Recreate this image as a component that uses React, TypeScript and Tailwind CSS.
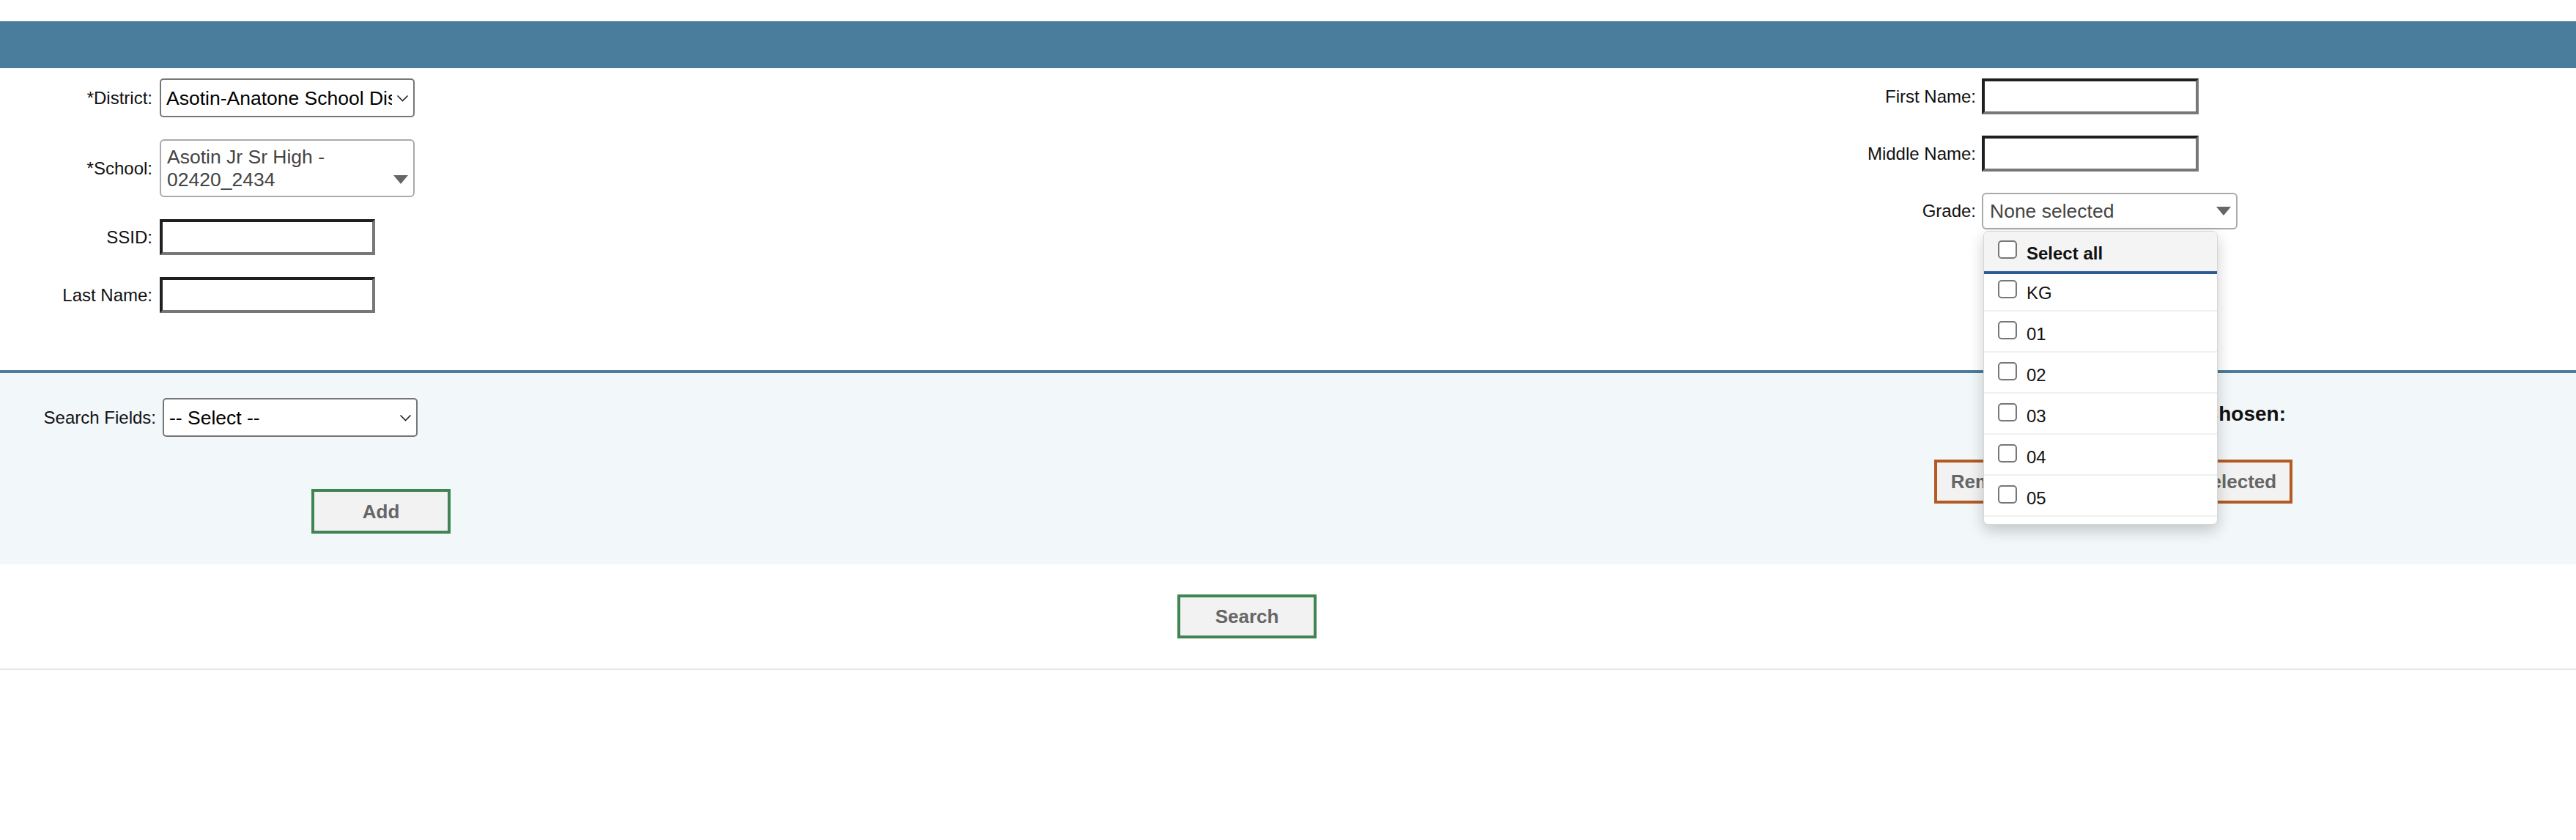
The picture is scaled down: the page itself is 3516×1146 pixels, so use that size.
import React from 'react';

const GRADES = ['KG', '01', '02', '03', '04', '05', '06', '07', '08', '09', '10', '11', '12'];

function Chevron() {
  return (
    <svg width="17" height="10" viewBox="0 0 17 10" fill="none" className="shrink-0">
      <path d="M1.5 1.5L8.5 8.5L15.5 1.5" stroke="#222" strokeWidth="1.6" />
    </svg>
  );
}

function Caret() {
  return (
    <svg width="20" height="12" viewBox="0 0 20 12" className="shrink-0">
      <path d="M0 0H20L10 12Z" fill="#666" />
    </svg>
  );
}

function Label({ children }: { children: React.ReactNode }) {
  return <div className="text-right text-[24px] leading-[28px] text-[#111] whitespace-nowrap">{children}</div>;
}

function TextInput({ w }: { w: string }) {
  return (
    <div
      className={`${w} h-[49px] bg-white border-4 border-t-[#1f1f1f] border-l-[#1f1f1f] border-b-[#777] border-r-[#777]`}
    />
  );
}

function NativeSelect({ text, w }: { text: string; w: string }) {
  return (
    <div
      className={`${w} h-[53px] flex items-center bg-white border-2 border-[#767676] rounded-[5px] pl-[7px] pr-[6px]`}
    >
      <span className="flex-1 min-w-0 overflow-hidden whitespace-nowrap text-[26.5px] leading-[32px] text-black">
        {text}
      </span>
      <span className="ml-[6px]">
        <Chevron />
      </span>
    </div>
  );
}

function Checkbox() {
  return <span className="block shrink-0 w-[26px] h-[25px] bg-white border-2 border-[#777] rounded-[5px]" />;
}

function GradeDropdown() {
  return (
    <div className="absolute left-[2px] top-[52px] z-10 w-[320px] h-[401px] overflow-hidden bg-white border border-[#d6d6d6] rounded-[7px] shadow-[0_8px_20px_rgba(0,0,0,0.2)]">
      <div className="h-[58px] flex items-start gap-[13px] pl-[19px] bg-[#f4f4f4] border-b-4 border-[#2c5a94]">
        <span className="mt-[12px]">
          <Checkbox />
        </span>
        <span className="mt-[16px] text-[24px] leading-[28px] font-bold text-[#111]">Select all</span>
      </div>
      {GRADES.map((g, i) => (
        <div
          key={g}
          className={`flex items-start gap-[13px] pl-[19px] border-b-2 border-[#f0f0f0] ${
            i === 0 ? 'h-[51px]' : 'h-[56px]'
          }`}
        >
          <span className={i === 0 ? 'mt-[8px]' : 'mt-[13px]'}>
            <Checkbox />
          </span>
          <span className={`text-[24px] leading-[28px] text-[#111] ${i === 0 ? 'mt-[12px]' : 'mt-[17px]'}`}>
            {g}
          </span>
        </div>
      ))}
    </div>
  );
}

function ActionButton({ children, w, tone }: { children: React.ReactNode; w: string; tone: 'green' | 'orange' }) {
  return (
    <button
      type="button"
      className={`${w} h-[60px] bg-[#f2f2f2] border-4 ${
        tone === 'green' ? 'border-[#3f8552]' : 'border-[#b35a22]'
      } text-[26px] leading-[30px] font-bold text-[#666] whitespace-nowrap`}
    >
      {children}
    </button>
  );
}

export default function App() {
  return (
    <div className="min-h-screen w-full overflow-hidden bg-white pt-[29px] font-['Liberation_Sans',Arial,Helvetica,sans-serif]">
      {/* title bar */}
      <div className="h-[64px] bg-[#4a7c9b]" />

      {/* student criteria */}
      <section className="h-[412px] flex">
        <div className="w-[2537px] shrink-0 pt-[14px]">
          <div className="grid grid-cols-[208px_auto] gap-x-[10px] gap-y-[30px] items-center justify-start">
            <Label>*District:</Label>
            <NativeSelect text="Asotin-Anatone School District" w="w-[348px]" />

            <Label>*School:</Label>
            <div className="w-[348px] h-[79px] flex items-end justify-between bg-white border-2 border-[#aaa] rounded-[6px] pl-[8px] pr-[7px] pt-[7px]">
              <div className="self-start text-[26.5px] leading-[31px] text-[#444]">
                Asotin Jr Sr High -
                <br />
                02420_2434
              </div>
              <span className="mb-[16px]">
                <Caret />
              </span>
            </div>

            <Label>SSID:</Label>
            <TextInput w="w-[294px]" />

            <Label>Last Name:</Label>
            <TextInput w="w-[294px]" />
          </div>
        </div>

        <div className="pt-[14px]">
          <div className="grid grid-cols-[160px_auto] gap-x-[8px] gap-y-[29px] items-center justify-start">
            <Label>First Name:</Label>
            <TextInput w="w-[296px]" />

            <Label>Middle Name:</Label>
            <TextInput w="w-[296px]" />

            <Label>Grade:</Label>
            <div className="relative">
              <div className="w-[349px] h-[50px] flex items-center justify-between bg-white border-2 border-[#aaa] rounded-[6px] pl-[9px] pr-[7px]">
                <span className="text-[26.5px] leading-[31px] text-[#444]">None selected</span>
                <Caret />
              </div>
              <GradeDropdown />
            </div>
          </div>
        </div>
      </section>

      {/* search fields */}
      <section className="h-[265px] flex border-t-4 border-[#4a7c9b] bg-[#f2f7fa]">
        <div className="w-[1000px] shrink-0 pt-[34px]">
          <div className="grid grid-cols-[213px_auto] gap-x-[9px] items-center justify-start">
            <Label>Search Fields:</Label>
            <NativeSelect text="-- Select --" w="w-[348px]" />
          </div>
          <div className="pl-[425px] mt-[71px]">
            <ActionButton w="w-[190px] h-[61px]" tone="green">
              Add
            </ActionButton>
          </div>
        </div>

        <div className="ml-auto mr-[387px] w-[489px] pt-[40px]">
          <div className="pr-[9px] text-right text-[28px] leading-[32px] font-bold text-[#111]">Search Fields Chosen:</div>
          <div className="mt-[46px] flex justify-between">
            <ActionButton w="w-[186px]" tone="orange">
              Remove All
            </ActionButton>
            <ActionButton w="w-[259px]" tone="orange">
              Remove Selected
            </ActionButton>
          </div>
        </div>
      </section>

      {/* submit */}
      <div className="h-[142px] pt-[41px] pl-[1607px]">
        <ActionButton w="w-[190px]" tone="green">
          Search
        </ActionButton>
      </div>
      <div className="border-t-2 border-[#e6e6e6]" />
    </div>
  );
}
